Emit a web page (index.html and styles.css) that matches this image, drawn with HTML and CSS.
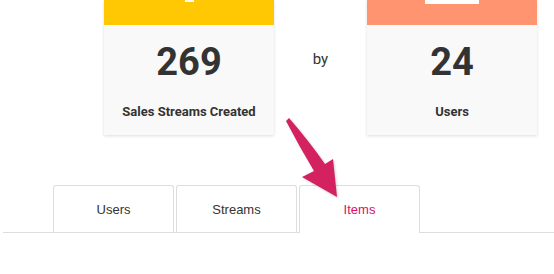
FILE: index.html
```html
<!DOCTYPE html>
<html lang="en">
<head>
    <meta charset="UTF-8">
    <meta name="viewport" content="width=device-width, initial-scale=1.0">
    <title>Stats</title>
    <link rel="stylesheet" href="styles.css">
</head>
<body>
    <div class="stats">
        <div class="stat-card">
            <div class="stat-head yellow">
                <span class="icon-tip small"></span>
            </div>
            <div class="stat-body">
                <div class="stat-value">269</div>
                <div class="stat-label">Sales Streams Created</div>
            </div>
        </div>

        <div class="stat-by">by</div>

        <div class="stat-card">
            <div class="stat-head orange">
                <span class="icon-tip wide"></span>
            </div>
            <div class="stat-body">
                <div class="stat-value">24</div>
                <div class="stat-label">Users</div>
            </div>
        </div>
    </div>

    <div class="tabs">
        <div class="tab">Users</div>
        <div class="tab">Streams</div>
        <div class="tab active">Items</div>
    </div>

    <!-- annotation arrow -->
    <svg class="arrow" width="554" height="274" viewBox="0 0 554 274">
        <path d="M286,121 L289,118 Q309,141 325,164 L333,159 L337,197 L302,177 L314,171 Q299,146 286,121 Z" fill="#d3225f"/>
    </svg>
</body>
</html>
```

FILE: styles.css
```css
body {
    margin: 0;
    padding: 0;
    width: 554px;
    height: 274px;
    overflow: hidden;
    background-color: #fff;
    font-family: Roboto, "Liberation Sans", sans-serif;
    color: #333;
    position: relative;
}

.stats {
    display: flex;
    align-items: flex-start;
    padding-left: 104px;
}

.stat-card {
    width: 170px;
    background-color: #f9f9f9;
    box-shadow: 0 1px 3px rgba(0, 0, 0, 0.14);
}

.stat-head {
    height: 25px;
    display: flex;
    justify-content: center;
    align-items: flex-start;
}

.stat-head.yellow {
    background-color: #ffc803;
}

.stat-head.orange {
    background-color: #ff9470;
}

.icon-tip {
    display: block;
    background-color: #fff;
}

.icon-tip.small {
    width: 9px;
    height: 2px;
}

.icon-tip.wide {
    width: 54px;
    height: 4px;
}

.stat-body {
    height: 110px;
    text-align: center;
}

.stat-value {
    font-size: 38px;
    font-weight: 700;
    line-height: 44px;
    padding-top: 15px;
}

.stat-label {
    font-size: 13px;
    font-weight: 700;
    margin-top: 20px;
}

.stat-by {
    width: 93px;
    text-align: center;
    font-size: 15px;
    padding-top: 50px;
}

.tabs {
    display: flex;
    margin: 50px 0 0 3px;
    padding-left: 50px;
    border-bottom: 1px solid #ddd;
    font-family: "Liberation Sans", Arial, sans-serif;
    font-size: 13px;
}

.tab {
    width: 119px;
    height: 46px;
    line-height: 48px;
    text-align: center;
    border: 1px solid #ddd;
    border-bottom: none;
    border-radius: 3px 3px 0 0;
    margin-right: 2px;
    color: #333;
}

.tab.active {
    color: #d3135f;
    height: 47px;
    margin-bottom: -1px;
    background-color: #fff;
}

.arrow {
    position: absolute;
    left: 0;
    top: 0;
    pointer-events: none;
    filter: drop-shadow(1px 1px 1px rgba(0, 0, 0, 0.2));
}
```
